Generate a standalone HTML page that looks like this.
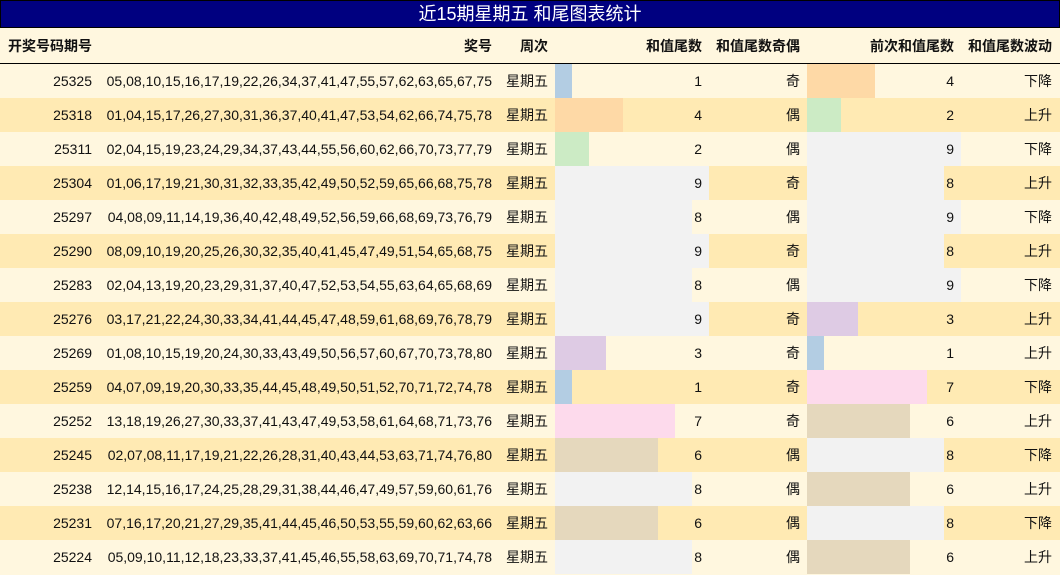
<!DOCTYPE html>
<html><head><meta charset="utf-8"><style>
*{margin:0;padding:0;box-sizing:border-box}
body{width:1060px;height:575px;overflow:hidden;background:#fff7df;font-family:"Liberation Sans","Noto Sans CJK SC",sans-serif;font-size:14px;color:#111;position:relative}
.title{position:absolute;left:0;top:0;width:1060px;height:28px;background:#000080;border:1px solid #000;color:#fff;font-size:18px;text-align:center;line-height:27px}
.hdr{position:absolute;top:28px;left:0;width:1060px;height:36px;background:#fff7df;border-bottom:1.5px solid #000;font-weight:bold}
.row{position:absolute;left:0;width:1060px;height:34px}
.c{position:absolute;top:0;height:100%;line-height:34px;white-space:nowrap}
.r{text-align:right}
.bar{position:absolute;top:0;height:34px}
</style></head><body>
<div class="title">近15期星期五 和尾图表统计</div>
<div class="hdr">
<div class="c" style="left:8px;line-height:36px">开奖号码期号</div>
<div class="c r" style="right:568px;line-height:36px">奖号</div>
<div class="c r" style="right:512px;line-height:36px">周次</div>
<div class="c r" style="right:358px;line-height:36px">和值尾数</div>
<div class="c r" style="right:260px;line-height:36px">和值尾数奇偶</div>
<div class="c r" style="right:106px;line-height:36px">前次和值尾数</div>
<div class="c r" style="right:8px;line-height:36px">和值尾数波动</div>
</div>
<div id="rows"></div>
<script>
var d=[
["25325","05,08,10,15,16,17,19,22,26,34,37,41,47,55,57,62,63,65,67,75",1,"奇",4,"下降"],
["25318","01,04,15,17,26,27,30,31,36,37,40,41,47,53,54,62,66,74,75,78",4,"偶",2,"上升"],
["25311","02,04,15,19,23,24,29,34,37,43,44,55,56,60,62,66,70,73,77,79",2,"偶",9,"下降"],
["25304","01,06,17,19,21,30,31,32,33,35,42,49,50,52,59,65,66,68,75,78",9,"奇",8,"上升"],
["25297","04,08,09,11,14,19,36,40,42,48,49,52,56,59,66,68,69,73,76,79",8,"偶",9,"下降"],
["25290","08,09,10,19,20,25,26,30,32,35,40,41,45,47,49,51,54,65,68,75",9,"奇",8,"上升"],
["25283","02,04,13,19,20,23,29,31,37,40,47,52,53,54,55,63,64,65,68,69",8,"偶",9,"下降"],
["25276","03,17,21,22,24,30,33,34,41,44,45,47,48,59,61,68,69,76,78,79",9,"奇",3,"上升"],
["25269","01,08,10,15,19,20,24,30,33,43,49,50,56,57,60,67,70,73,78,80",3,"奇",1,"上升"],
["25259","04,07,09,19,20,30,33,35,44,45,48,49,50,51,52,70,71,72,74,78",1,"奇",7,"下降"],
["25252","13,18,19,26,27,30,33,37,41,43,47,49,53,58,61,64,68,71,73,76",7,"奇",6,"上升"],
["25245","02,07,08,11,17,19,21,22,26,28,31,40,43,44,53,63,71,74,76,80",6,"偶",8,"下降"],
["25238","12,14,15,16,17,24,25,28,29,31,38,44,46,47,49,57,59,60,61,76",8,"偶",6,"上升"],
["25231","07,16,17,20,21,27,29,35,41,44,45,46,50,53,55,59,60,62,63,66",6,"偶",8,"下降"],
["25224","05,09,10,11,12,18,23,33,37,41,45,46,55,58,63,69,70,71,74,78",8,"偶",6,"上升"]];
var col={1:"#b3cde3",2:"#ccebc5",3:"#decbe4",4:"#fed9a6",6:"#e5d8bd",7:"#fddaec",8:"#f2f2f2",9:"#f2f2f2"};
var h="";
d.forEach(function(r,i){
var top=64+i*34,bg=i%2?"#ffeab3":"#fff7df";
h+='<div class="row" style="top:'+top+'px;background:'+bg+'">'+
'<div class="bar" style="left:555px;width:'+Math.round(r[2]*17.1)+'px;background:'+col[r[2]]+'"></div>'+
'<div class="bar" style="left:807px;width:'+Math.round(r[4]*17.1)+'px;background:'+col[r[4]]+'"></div>'+
'<div class="c r" style="right:968px">'+r[0]+'</div>'+
'<div class="c r" style="right:568px">'+r[1]+'</div>'+
'<div class="c" style="left:506px">星期五</div>'+
'<div class="c r" style="right:358px">'+r[2]+'</div>'+
'<div class="c r" style="right:260px">'+r[3]+'</div>'+
'<div class="c r" style="right:106px">'+r[4]+'</div>'+
'<div class="c r" style="right:8px">'+r[5]+'</div></div>';
});
document.getElementById("rows").innerHTML=h;
</script>
</body></html>
